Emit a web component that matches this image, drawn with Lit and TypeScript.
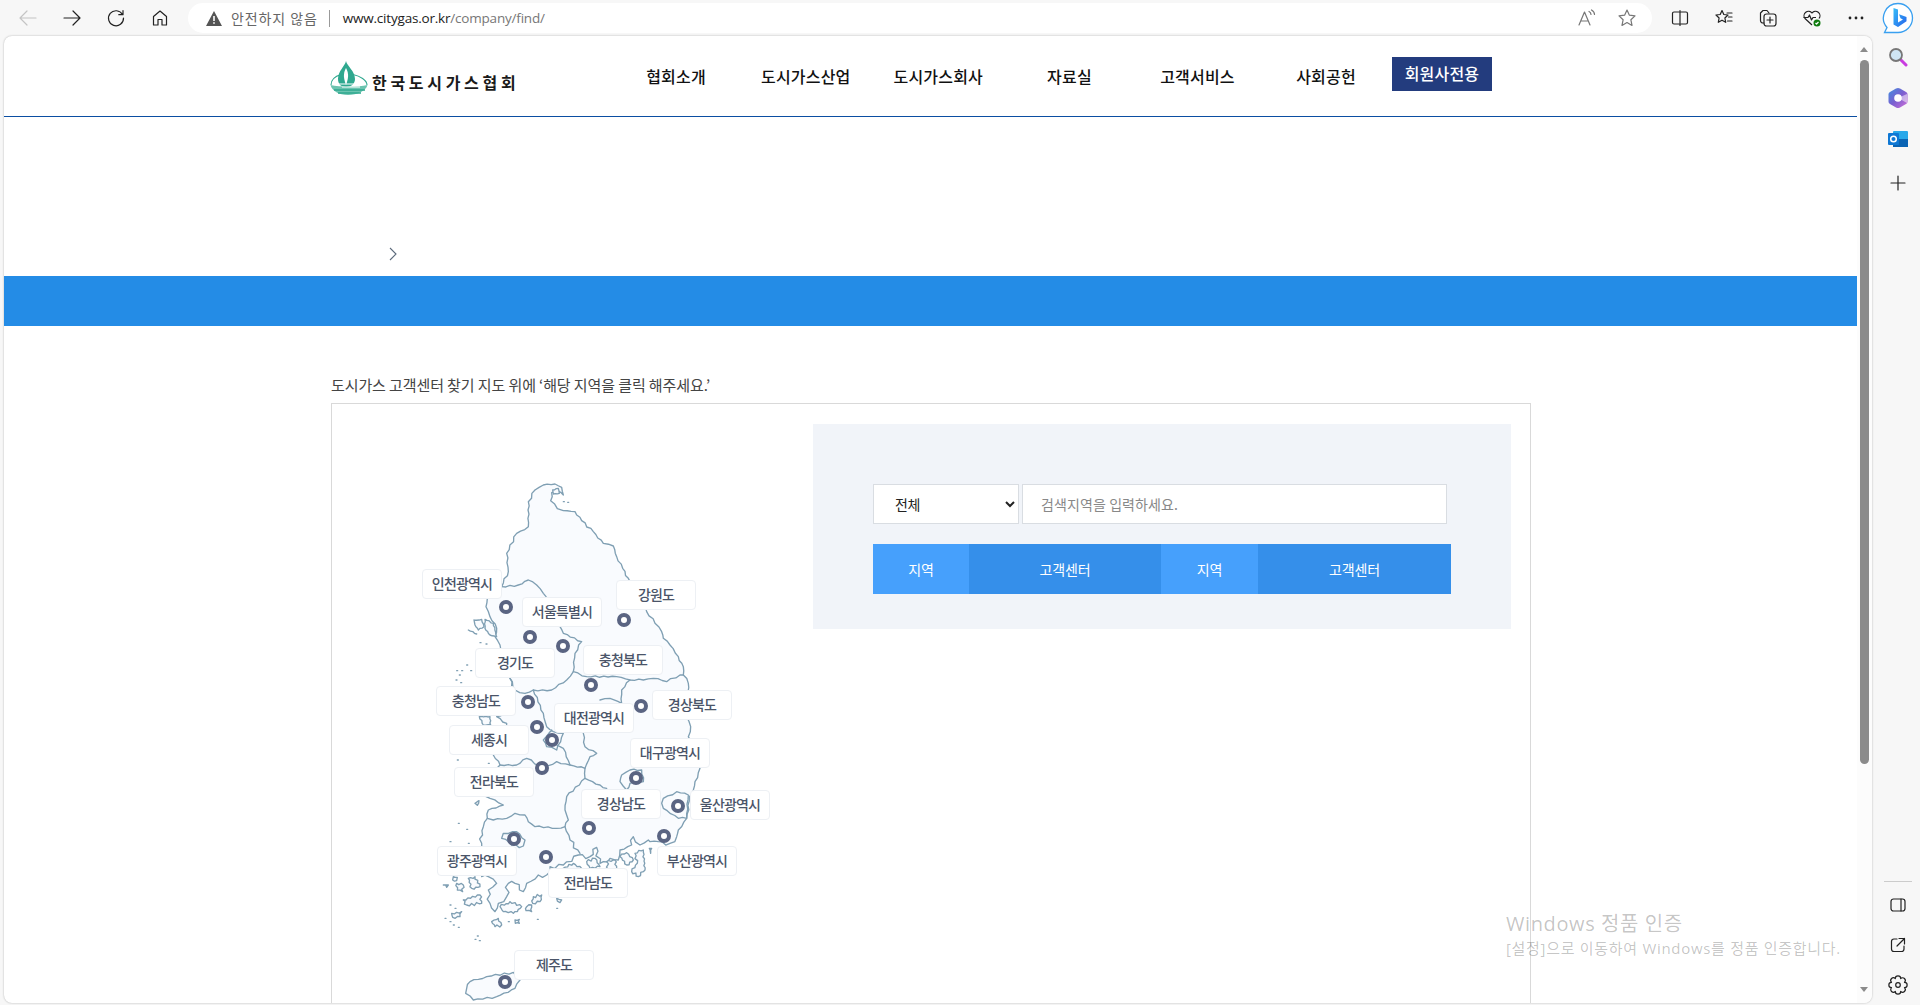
import { LitElement, html, css, svg } from 'lit';
import { customElement } from 'lit/decorators.js';

// page coordinates of the map bits, the canvas starts at 332,404
const ORIGIN = { x: 332, y: 404 };

const LABELS = [
  { name: '인천광역시', x: 422, y: 569 },
  { name: '강원도', x: 616, y: 580 },
  { name: '서울특별시', x: 522, y: 597 },
  { name: '경기도', x: 475, y: 648 },
  { name: '충청북도', x: 583, y: 645 },
  { name: '충청남도', x: 436, y: 686 },
  { name: '경상북도', x: 652, y: 690 },
  { name: '대전광역시', x: 554, y: 703 },
  { name: '세종시', x: 449, y: 725 },
  { name: '대구광역시', x: 630, y: 738 },
  { name: '전라북도', x: 454, y: 767 },
  { name: '경상남도', x: 581, y: 789 },
  { name: '울산광역시', x: 690, y: 790 },
  { name: '광주광역시', x: 437, y: 846 },
  { name: '부산광역시', x: 657, y: 846 },
  { name: '전라남도', x: 548, y: 868 },
  { name: '제주도', x: 514, y: 950 },
];

const PINS = [
  [506, 607], [624, 620], [530, 637], [563, 646], [591, 685], [528, 702],
  [641, 706], [537, 727], [552, 740], [542, 768], [636, 778], [678, 806],
  [589, 828], [664, 836], [514, 839], [546, 857], [505, 982],
];

// outline drawn at 3x, from 400,460. Points only, roughen() makes them look like coast
const MAINLAND =
  '405,90 430,75 465,72 485,82 490,105 472,92 455,98 452,122 472,146 490,152 525,155 545,182 580,215 610,250 640,258 650,290 668,325 685,355 715,410 740,455 765,490 785,515 790,535 810,555 835,590 850,620 850,645 865,670 868,720 860,770 872,800 865,830 880,870 900,925 885,965 880,990 868,1010 860,1075 835,1110 830,1130 810,1150 775,1145 750,1145 745,1140 720,1155 700,1130 695,1155 660,1170 655,1200 630,1195 600,1210 590,1162 570,1190 535,1185 490,1215 450,1220 440,1245 415,1245 380,1270 370,1295 345,1270 325,1270 320,1310 295,1330 285,1355 270,1330 265,1290 290,1270 265,1250 245,1250 235,1200 245,1150 250,1100 262,1075 265,1050 310,1035 270,1015 230,1000 265,950 300,915 280,885 320,850 320,790 290,770 345,745 345,700 330,655 300,600 300,555 285,530 290,505 270,470 258,440 262,415 280,395 305,380 325,335 320,280 350,220 385,200 385,125 405,90';

const BORDERS = [
  '305,380 355,375 385,360 410,375 430,400 480,500 490,520 545,545 525,580 520,635 560,650 650,650 690,660 730,660 760,655 800,665 840,645 850,645',
  '520,635 500,660 455,690 400,690 375,700 345,690 330,655',
  '690,660 665,690 665,730 630,715 600,720',
  '400,690 430,760 440,800 460,815 490,820 470,870 440,860 430,840 455,810',
  '550,820 555,860 590,880 570,890 555,925 510,915 490,865 470,855',
  '555,925 555,955 500,1010 495,1050 505,1080 495,1100 510,1140 540,1180',
  '262,1075 280,1080 320,1075 345,1060 375,1065 385,1085 405,1100 470,1105 495,1100',
  '555,955 600,975 620,985',
  '300,915 350,915 380,895 430,925 470,905 510,915',
  '785,1030 790,1015 830,995 865,1005 860,1075 835,1075 790,1045 785,1030',
  '660,965 665,945 690,930 725,930 730,965 690,970 680,990 660,965',
  '310,1120 350,1115 375,1140 370,1158 335,1155 305,1135 310,1120',
];

const ISLANDS = [
  '222,480 245,478 252,500 235,510 225,495 222,480',
  '255,478 280,490 290,530 270,525 255,505 255,478',
  '205,510 230,522',
  '458,90 475,85 478,100 460,102 458,90',
  '238,770 270,770 272,795 250,795 238,770',
  '190,1320 240,1305 245,1330 200,1335 190,1320',
  '160,1250 172,1252 170,1262 158,1260 160,1250',
  '170,1270 190,1275 188,1295 172,1290 170,1270',
  '205,1255 225,1250 240,1280 215,1285 205,1255',
  '300,1340 330,1325 365,1340 340,1360 310,1355 300,1340',
  '400,1310 425,1305 420,1325 398,1330 400,1310',
  '380,1340 395,1335 395,1355 378,1352 380,1340',
  '275,1385 295,1375 305,1395 285,1400 275,1385',
  '345,1380 358,1378 358,1390 346,1390 345,1380',
  '470,1315 485,1320 480,1328 470,1315',
  '660,1190 680,1178 700,1200 680,1215 660,1190',
  '705,1180 730,1170 735,1230 715,1250 695,1235 712,1210 705,1180',
  '560,1205 585,1195 600,1220 570,1225 560,1205',
  '620,1205 645,1200 650,1225 625,1228 620,1205',
  '490,1225 520,1210 545,1225 510,1235 490,1225',
  '225,1030 237,1022 232,1036 225,1030',
  '155,1360 185,1355 180,1370 158,1372 155,1360',
  '130,1275 145,1275 140,1282 130,1275',
  '748,1165 755,1165 752,1180 748,1165',
];

const SPECKS = [
  [170, 632], [178, 645], [185, 632], [168, 660], [182, 668], [200, 615], [212, 632],
  [490, 125], [503, 127], [240, 548], [258, 552], [172, 900], [265, 910], [175, 1090],
  [200, 1108], [150, 1145], [205, 1150], [135, 1375], [150, 1385], [325, 1385],
  [412, 1378], [225, 1438], [238, 1442], [232, 1428], [160, 1395], [175, 1402],
  [150, 1335], [165, 1345], [470, 1345],
];

const JEJU = '200,1585 210,1565 260,1550 340,1537 360,1560 345,1585 290,1610 220,1620 197,1600 200,1585';

// breaks each segment up and pushes the points sideways, deterministic so every run looks the same
function roughen(points: string, amp = 3.5, step = 13) {
  const pts = points.split(' ').map((p) => p.split(',').map(Number));
  let d = `M${pts[0][0]},${pts[0][1]}`;
  let seed = pts[0][0] * 0.37 + pts[0][1] * 0.11;
  for (let i = 1; i < pts.length; i++) {
    const [x0, y0] = pts[i - 1];
    const [x1, y1] = pts[i];
    const len = Math.hypot(x1 - x0, y1 - y0);
    const n = Math.max(1, Math.round(len / step));
    const nx = -(y1 - y0) / (len || 1);
    const ny = (x1 - x0) / (len || 1);
    for (let k = 1; k <= n; k++) {
      const t = k / n;
      const x = x0 + (x1 - x0) * t;
      const y = y0 + (y1 - y0) * t;
      seed += 1.7;
      const south = y > 1130 ? 2.2 : 1;
      const off = k === n ? 0 : (Math.sin(seed * 12.9898) * 43758.5453) % 1;
      d += ` L${(x + nx * off * amp * south).toFixed(1)},${(y + ny * off * amp * south).toFixed(1)}`;
    }
  }
  return d;
}

function gearPath() {
  const lobes = 8;
  const r = 7;
  let d = '';
  for (let i = 0; i <= lobes; i++) {
    const a = (Math.PI * 2 * i) / lobes + Math.PI / lobes;
    const x = (10 + r * Math.cos(a)).toFixed(2);
    const y = (10 + r * Math.sin(a)).toFixed(2);
    d += i === 0 ? `M${x},${y}` : ` A2.6,2.6 0 0 1 ${x},${y}`;
  }
  return d + 'Z';
}

@customElement('app-root')
export class AppRoot extends LitElement {
  static styles = css`
    :host {
      display: block;
      width: 1920px;
      height: 1005px;
      overflow: hidden;
      background: #f7f7f7;
      font-family: 'Noto Sans CJK KR', 'Noto Sans', sans-serif;
      color: #222;
    }

    /* browser chrome */
    .toolbar {
      display: flex;
      align-items: center;
      height: 36px;
      padding-left: 6px;
    }
    .tool {
      width: 44px;
      height: 36px;
      display: flex;
      align-items: center;
      justify-content: center;
      flex: none;
    }
    .address {
      display: flex;
      align-items: center;
      width: 1464px;
      height: 30px;
      margin: 0 6px;
      padding: 0 5px 0 18px;
      box-sizing: border-box;
      background: #fff;
      border-radius: 15px;
      font-size: 13.5px;
      flex: none;
    }
    .insecure {
      margin-left: 9px;
      color: #666;
      font-size: 14px;
      letter-spacing: 0.9px;
      white-space: nowrap;
    }
    .divider {
      width: 1px;
      height: 17px;
      background: #999;
      margin: 0 13px 0 11px;
    }
    .url {
      color: #777;
      font-family: 'Open Sans', sans-serif;
      font-size: 13.5px;
      letter-spacing: -0.2px;
    }
    .url b {
      color: #222;
      font-weight: 400;
    }
    .address .spacer {
      flex: 1;
    }
    .address .tool {
      width: 40px;
    }
    .bing {
      width: 40px;
    }

    .body {
      display: flex;
      height: 969px;
    }
    .page {
      display: flex;
      width: 1868px;
      height: 967px;
      margin-left: 4px;
      box-sizing: border-box;
      background: #fff;
      border-radius: 8px;
      box-shadow: 0 0 2px rgba(0, 0, 0, 0.3);
      overflow: hidden;
      position: relative;
    }
    .content {
      width: 1853px;
      flex: none;
    }
    .scrollbar {
      position: relative;
      flex: 1;
      background: #fcfcfc;
    }
    .scrollbar .thumb {
      position: absolute;
      left: 3px;
      top: 24px;
      width: 9px;
      height: 704px;
      border-radius: 5px;
      background: #8b8b8b;
    }
    .arrow {
      position: absolute;
      left: 3px;
      width: 0;
      height: 0;
      border-left: 4.5px solid transparent;
      border-right: 4.5px solid transparent;
    }
    .arrow.up {
      top: 11px;
      border-bottom: 5px solid #8b8b8b;
    }
    .arrow.down {
      bottom: 11px;
      border-top: 5px solid #8b8b8b;
    }
    .sidebar {
      flex: 1;
      display: flex;
      flex-direction: column;
      align-items: center;
      padding-left: 3px;
    }
    .side-item {
      height: 41px;
      width: 45px;
      display: flex;
      align-items: center;
      justify-content: center;
      flex: none;
    }
    .side-item.plus {
      padding-top: 3px;
    }
    .side-sep {
      width: 28px;
      height: 1px;
      background: #ccc;
      margin-top: auto;
      margin-bottom: 3px;
    }
    .side-item.low {
      height: 40px;
    }

    /* site header */
    .site-head {
      display: flex;
      align-items: center;
      height: 80px;
      padding-left: 324px;
      box-sizing: border-box;
    }
    .logo {
      display: flex;
      align-items: center;
      width: 192px;
      margin-top: 4px;
      flex: none;
    }
    .logo span {
      margin-left: 2px;
      font-size: 16px;
      font-weight: 700;
      letter-spacing: 3.7px;
      color: #1a1a1a;
      white-space: nowrap;
      margin-top: 7px;
    }
    nav {
      display: grid;
      grid-template-columns: 129px 130.5px 134.500px 128px 128px 129px;
      margin-left: 91.5px;
      flex: none;
    }
    nav a {
      text-align: center;
      font-size: 16px;
      font-weight: 500;
      letter-spacing: 0.2px;
      color: #111;
      white-space: nowrap;
    }
    .member {
      width: 100px;
      height: 34px;
      margin: 0 0 4px 1.5px;
      padding-bottom: 2px;
      display: flex;
      align-items: center;
      justify-content: center;
      box-sizing: border-box;
      background: #233c7e;
      color: #fff;
      font-size: 16px;
      font-weight: 500;
      letter-spacing: 0.2px;
      flex: none;
    }
    .rule {
      height: 1px;
      background: #0b4ea2;
    }
    .crumb {
      height: 159px;
      box-sizing: border-box;
      padding: 129px 0 0 384px;
    }
    .crumb svg {
      display: block;
    }
    .band {
      height: 50px;
      background: #248ce6;
    }
    .notice {
      margin: 48px 0 7px 327px;
      font-size: 15px;
      line-height: 22px;
      color: #444;
      letter-spacing: -0.1px;
    }

    /* map + search box */
    .box {
      display: flex;
      width: 1200px;
      height: 700px;
      margin-left: 327px;
      box-sizing: border-box;
      border: 1px solid #d9d9d9;
    }
    .map {
      position: relative;
      width: 481px;
      flex: none;
    }
    .map > svg {
      position: absolute;
      left: 68px;
      top: 56px;
    }
    .pin {
      position: absolute;
      width: 14px;
      height: 14px;
      box-sizing: border-box;
      border: 4px solid #5a6482;
      border-radius: 50%;
      background: #fff;
    }
    .tag {
      position: absolute;
      width: 80px;
      height: 30px;
      padding-bottom: 2px;
      box-sizing: border-box;
      display: flex;
      align-items: center;
      justify-content: center;
      background: #fff;
      border: 1px solid #edf0f4;
      border-radius: 4px;
      font-size: 14px;
      font-weight: 500;
      letter-spacing: -0.8px;
      color: #4a5468;
      white-space: nowrap;
    }
    .panel {
      width: 698px;
      height: 205px;
      margin-top: 20px;
      padding: 60px 0 0 60px;
      box-sizing: border-box;
      background: #f1f4f9;
      flex: none;
    }
    .search {
      display: flex;
      gap: 3px;
    }
    select,
    input {
      height: 40px;
      box-sizing: border-box;
      border: 1px solid #d9dde2;
      border-radius: 0;
      background: #fff;
      font-family: inherit;
      font-size: 14px;
      letter-spacing: -0.5px;
      outline: none;
    }
    select {
      width: 146px;
      padding-left: 17px;
      color: #222;
    }
    input {
      width: 425px;
      padding-left: 18px;
      letter-spacing: 0.1px;
    }
    input::placeholder {
      color: #888;
      opacity: 1;
    }
    .columns {
      display: grid;
      grid-template-columns: 96px 192px 97px 193px;
      width: 578px;
      height: 50px;
      margin-top: 20px;
      color: #fff;
      font-size: 14px;
      letter-spacing: -0.1px;
    }
    .columns div {
      display: flex;
      align-items: center;
      justify-content: center;
    }
    .columns .area {
      background: #46a0fc;
    }
    .columns .center {
      background: #358fea;
    }

    .watermark {
      position: absolute;
      left: 1502px;
      top: 874px;
      color: rgba(0, 0, 0, 0.24);
      pointer-events: none;
      font-family: 'Open Sans', 'Noto Sans CJK KR', sans-serif;
      white-space: nowrap;
    }
    .watermark .big {
      font-size: 20px;
      line-height: 28px;
      letter-spacing: 0.6px;
    }
    .watermark .small {
      font-size: 15px;
      line-height: 20px;
      letter-spacing: 0.7px;
    }
  `;

  private icon(body: unknown, size = 20) {
    return html`<svg width=${size} height=${size} viewBox="0 0 20 20" fill="none" stroke="#222" stroke-width="1.2" stroke-linejoin="round" stroke-linecap="round">${body}</svg>`;
  }

  private renderChrome() {
    return html`
      <div class="toolbar">
        <div class="tool">${this.icon(svg`<path stroke="#c4c4c4" d="M18 10H2M9 3l-7 7 7 7"/>`)}</div>
        <div class="tool">${this.icon(svg`<path d="M2 10h16M11 3l7 7-7 7"/>`)}</div>
        <div class="tool">${this.icon(svg`<path d="M16.5 6.5A7.5 7.5 0 1 0 17.5 10M17 2.5v4.2h-4.2"/>`)}</div>
        <div class="tool">${this.icon(svg`<path d="M3.5 8.5 10 3l6.5 5.5V17h-4.5v-5.5H8V17H3.5z"/>`)}</div>
        <div class="address">
          <svg width="16" height="15" viewBox="0 0 16 15"><path fill="#555" d="M8 0l8 15H0z"/><path stroke="#fff" stroke-width="1.6" d="M8 5v5M8 11.2v1.6"/></svg>
          <span class="insecure">안전하지 않음</span>
          <span class="divider"></span>
          <span class="url"><b>www.citygas.or.kr</b>/company/find/</span>
          <span class="spacer"></span>
          <div class="tool">${this.icon(svg`<path stroke="#777" d="M2 17 7.5 4 13 17M4 13h7M12 3.5c1.4.8 2 1.8 2 3M14.5 2c2 1.2 3 2.8 3 4.5"/>`)}</div>
          <div class="tool">${this.icon(svg`<path stroke="#777" d="M10 2l2.4 5.2 5.6.7-4.1 3.9 1.1 5.6L10 14.6l-5 2.8 1.1-5.6L2 7.9l5.6-.7z"/>`)}</div>
        </div>
        <div class="tool">${this.icon(svg`<path d="M9 4H4a1.5 1.5 0 0 0-1.5 1.5v9A1.5 1.5 0 0 0 4 16h5M11 4h5a1.5 1.5 0 0 1 1.5 1.5v9A1.5 1.5 0 0 1 16 16h-5M10 2.5v15"/>`)}</div>
        <div class="tool">${this.icon(svg`<path d="M8 2.5l1.8 4 4.2.5-3.1 3 .8 4.3L8 12.2l-3.7 2.1.8-4.3L2 7l4.2-.5zM13 5h5M14.5 9H18M13.5 13H18"/>`)}</div>
        <div class="tool">${this.icon(svg`<path d="M6 15H5a2.5 2.5 0 0 1-2.5-2.5V5L5 2.5h4L11 5"/><rect x="6" y="6" width="12" height="12" rx="2.5"/><path d="M12 9v6M9 12h6"/>`)}</div>
        <div class="tool">
          <svg width="20" height="20" viewBox="0 0 20 20" fill="none" stroke="#222" stroke-width="1.2" stroke-linejoin="round">
            <path d="M10 17 3 10.5A4.3 4.3 0 0 1 10 5a4.3 4.3 0 0 1 7 5.500"/>
            <path d="M1.500 9.500H6l1.500-2.500 2 5 1.500-2.500h3"/>
            <circle cx="15" cy="15" r="3.500" fill="#107c10" stroke="none"/>
            <path stroke="#fff" d="M13.500 15l1 1 2-2"/>
          </svg>
        </div>
        <div class="tool">
          <svg width="20" height="20" viewBox="0 0 20 20" fill="#222"><circle cx="4" cy="10" r="1.400"/><circle cx="10" cy="10" r="1.400"/><circle cx="16" cy="10" r="1.400"/></svg>
        </div>
        <div class="tool bing">
          <svg width="32" height="32" viewBox="0 0 32 32">
            <defs>
              <linearGradient id="bg" x1="0" y1="0" x2="1" y2="1"><stop offset="0" stop-color="#37bdf8"/><stop offset="1" stop-color="#2563eb"/></linearGradient>
            </defs>
            <path fill="#fff" stroke="#3aa0f0" stroke-width="1.300" d="M16 1.500A14.500 14.500 0 0 1 16 30.500H2.500l2.500-5A14.500 14.500 0 0 1 16 1.500z"/>
            <path fill="url(#bg)" d="M11.500 6l4.500 1.500v13l5-3-2.500-1.200-1.500-4 7.500 2.600v4.300L16 25l-4.500-2.500z"/>
          </svg>
        </div>
      </div>
    `;
  }

  private renderSidebar() {
    return html`
      <div class="sidebar">
        <div class="side-item">
          <svg width="20" height="20" viewBox="0 0 20 20"><path stroke="#c93ce0" stroke-width="3" stroke-linecap="round" d="M12 12l6 6"/><circle cx="8" cy="8" r="6" fill="#cfe6f5" stroke="#777" stroke-width="1.800"/></svg>
        </div>
        <div class="side-item">
          <svg width="20" height="22" viewBox="0 0 20 22">
            <defs>
              <linearGradient id="of" x1="0" y1="0" x2="1" y2="1"><stop offset="0" stop-color="#3f8fe0"/><stop offset=".5" stop-color="#7a5fd0"/><stop offset="1" stop-color="#d070d8"/></linearGradient>
            </defs>
            <path fill="url(#of)" d="M8 1.500C9.500.700 10.500.700 12 1.500l6 3.500c1 .6 1.500 1.500 1.500 2.500v7c0 1-.5 1.900-1.500 2.500l-6 3.500c-1.500.8-2.500.8-4 0l-6-3.500C1 16.400.500 15.500.500 14.500v-7c0-1 .5-1.900 1.500-2.500z"/>
            <circle cx="10" cy="11" r="3.800" fill="#fff"/>
            <path fill="#fff" opacity=".5" d="M10 11l9 5v-9z"/>
          </svg>
        </div>
        <div class="side-item">
          <svg width="20" height="18" viewBox="0 0 20 18"><rect x="5" y="1" width="15" height="16" rx="1" fill="#28a8ea"/><path fill="#0a64b4" d="M5 9h15v8H5z"/><rect x="0" y="3" width="11" height="12" rx="1" fill="#0f78d4"/><circle cx="5.500" cy="9" r="2.800" fill="none" stroke="#fff" stroke-width="1.500"/></svg>
        </div>
        <div class="side-item plus">${this.icon(svg`<path d="M10 3v14M3 10h14"/>`)}</div>
        <div class="side-sep"></div>
        <div class="side-item low">${this.icon(svg`<rect x="3" y="4" width="14" height="12" rx="2.500"/><path d="M13 4v12"/>`)}</div>
        <div class="side-item low">${this.icon(svg`<path d="M9 4H6a2.500 2.500 0 0 0-2.500 2.500v7.500A2.500 2.500 0 0 0 6 16.500h7.500A2.500 2.500 0 0 0 16 14v-3M11 3.500h5.500V9M16.500 3.500 9 11"/>`)}</div>
        <div class="side-item low">${this.icon(svg`<path d=${gearPath()}/><circle cx="10" cy="10" r="2.300"/>`)}</div>
      </div>
    `;
  }

  private renderMap() {
    return html`
      <div class="map">
        <svg width="400" height="560" viewBox="0 0 1200 1680" fill="none" stroke="#7f9fb3" stroke-width="4" stroke-linejoin="round" stroke-linecap="round">
          <path d=${roughen(MAINLAND)} fill="#f9fbfe"/>
          <path d=${roughen(JEJU, 1.5)} fill="#f9fbfe"/>
          ${BORDERS.map((d) => svg`<path d=${roughen(d, 3)}/>`)}
          ${ISLANDS.map((d) => svg`<path d=${roughen(d, 2, 7)} fill="#f9fbfe"/>`)}
          ${SPECKS.map(([x, y]) => svg`<path d="M${x},${y}h3"/>`)}
        </svg>
        ${PINS.map(
          ([x, y]) =>
            html`<span class="pin" style="left:${x - ORIGIN.x - 7}px;top:${y - ORIGIN.y - 7}px"></span>`
        )}
        ${LABELS.map(
          (l) =>
            html`<span class="tag" style="left:${l.x - ORIGIN.x}px;top:${l.y - ORIGIN.y}px">${l.name}</span>`
        )}
      </div>
    `;
  }

  render() {
    return html`
      ${this.renderChrome()}
      <div class="body">
        <div class="page">
          <div class="content">
            <header class="site-head">
              <div class="logo">
                <svg width="42" height="36" viewBox="0 0 42 36">
                  <path d="M3 25C3 19 8 16 13 14.500M25 14.500C32 16 39 20 39 25" fill="none" stroke="#2fa88f" stroke-width="1.100"/>
                  <path d="M2.500 25C4 31 11 35 20 35C29 35 38 31 39.500 25C30 27 12 27 2.500 25Z" fill="#6cc4b0"/>
                  <path d="M6 30H37M10 33H33" stroke="#2fa88f" stroke-width="1.400"/>
                  <path d="M18 1C19 6 27 11 27 19C27 24 23 27 18 27C13 27 10 24 10 19C10 11 17 6 18 1Z" fill="#2fa88f"/>
                  <path d="M18 8C20 12 21.500 16 18 25C14.500 16 16 12 18 8Z" fill="#fff"/>
                  <path d="M11 24H28M14 27H32" stroke="#fff" stroke-width="1"/>
                </svg>
                <span>한국도시가스협회</span>
              </div>
              <nav>
                <a>협회소개</a>
                <a>도시가스산업</a>
                <a>도시가스회사</a>
                <a>자료실</a>
                <a>고객서비스</a>
                <a>사회공헌</a>
              </nav>
              <div class="member">회원사전용</div>
            </header>
            <div class="rule"></div>
            <div class="crumb">
              <svg width="10" height="16" viewBox="0 0 10 16" fill="none" stroke="#5d6b7c" stroke-width="1.100"><path d="M2 2l6 6-6 6"/></svg>
            </div>
            <div class="band"></div>
            <p class="notice">도시가스 고객센터 찾기 지도 위에 ‘해당 지역을 클릭 해주세요.’</p>
            <div class="box">
              ${this.renderMap()}
              <div class="panel">
                <div class="search">
                  <select><option>전체</option></select>
                  <input placeholder="검색지역을 입력하세요." />
                </div>
                <div class="columns">
                  <div class="area">지역</div>
                  <div class="center">고객센터</div>
                  <div class="area">지역</div>
                  <div class="center">고객센터</div>
                </div>
              </div>
            </div>
          </div>
          <div class="scrollbar">
            <span class="arrow up"></span>
            <div class="thumb"></div>
            <span class="arrow down"></span>
          </div>
          <div class="watermark">
            <div class="big">Windows 정품 인증</div>
            <div class="small">[설정]으로 이동하여 Windows를 정품 인증합니다.</div>
          </div>
        </div>
        ${this.renderSidebar()}
      </div>
    `;
  }
}
